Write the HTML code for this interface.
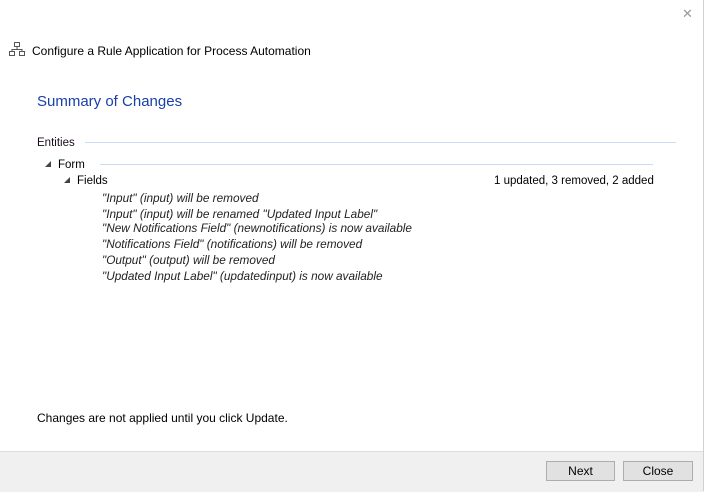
<!DOCTYPE html>
<html><head><style>
body{margin:0;width:704px;height:491px;background:#fff;font-family:"Liberation Sans",sans-serif;font-size:11.5px;color:#000;position:relative;overflow:hidden}
.a{position:absolute;white-space:nowrap}
.line{position:absolute;height:1px;background:#c9dcf5}
.tri{position:absolute;width:0;height:0;border-left:6px solid transparent;border-bottom:6px solid #444}
.i{font-style:italic;color:#222;font-size:11.8px}
.btn{position:absolute;top:461px;height:18px;border:1px solid #adadad;background:#e1e1e1;text-align:center;line-height:19px;font-size:12px}
</style></head><body>
<div class="a" style="left:682px;top:6px;font-size:13px;color:#999">✕</div>
<svg class="a" style="left:9px;top:42px" width="16" height="15" viewBox="0 0 16 15"><g fill="none" stroke="#555"><rect x="5.5" y="0.5" width="5" height="4"/><rect x="0.5" y="9.5" width="5" height="4"/><rect x="10.5" y="9.5" width="5" height="4"/><path d="M8 5v2.5M3 9.5V7.5h10v2"/></g></svg>
<div class="a" style="left:32px;top:44px;font-size:12px">Configure a Rule Application for Process Automation</div>
<div class="a" style="left:37px;top:93px;font-size:15px;color:#1a3fa8">Summary of Changes</div>
<div class="a" style="left:37px;top:137px;color:#1a0a1a">Entities</div>
<div class="line" style="left:85px;top:142px;width:591px"></div>
<div class="tri" style="left:45px;top:161px"></div>
<div class="a" style="left:58px;top:159px">Form</div>
<div class="line" style="left:100px;top:164px;width:553px"></div>
<div class="tri" style="left:64px;top:177px"></div>
<div class="a" style="left:77px;top:175px">Fields</div>
<div class="a" style="left:494px;top:175px">1 updated, 3 removed, 2 added</div>
<div class="a i" style="left:102px;top:191px">"Input" (input) will be removed</div>
<div class="a i" style="left:102px;top:207px">"Input" (input) will be renamed "Updated Input Label"</div>
<div class="a i" style="left:102px;top:221px">"New Notifications Field" (newnotifications) is now available</div>
<div class="a i" style="left:102px;top:237px">"Notifications Field" (notifications) will be removed</div>
<div class="a i" style="left:102px;top:253px">"Output" (output) will be removed</div>
<div class="a i" style="left:102px;top:269px">"Updated Input Label" (updatedinput) is now available</div>
<div class="a" style="left:37px;top:411px;font-size:12px">Changes are not applied until you click Update.</div>
<div class="a" style="left:0;top:451px;width:704px;height:40px;background:#f0f0f0;border-top:1px solid #dcdcdc"></div>
<div class="a" style="left:703px;top:0;width:1px;height:491px;background:#d0d0d0"></div>
<div class="btn" style="left:546px;width:67px">Next</div>
<div class="btn" style="left:623px;width:68px">Close</div>
</body></html>
